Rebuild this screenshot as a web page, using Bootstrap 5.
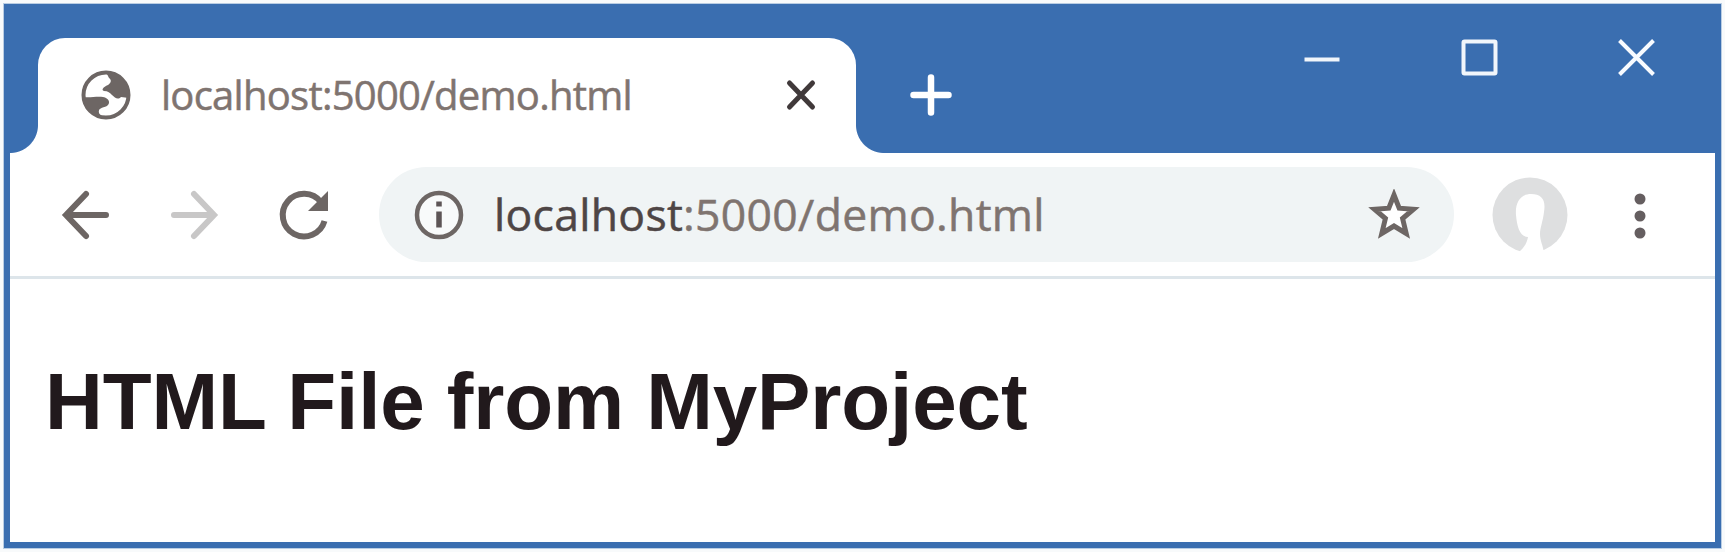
<!DOCTYPE html>
<html lang="en">
<head>
<meta charset="utf-8">
<title>localhost:5000/demo.html</title>
<link href="https://cdn.jsdelivr.net/npm/bootstrap@5.3.0/dist/css/bootstrap.min.css" rel="stylesheet">
<style>
  :root { --frame: #3a6eb0; --ink: #6d6664; }
  body { background: #f8fafb; height: 552px; padding: 3px; overflow: hidden; }
  svg { display: block; flex: none; }
  .browser { height: 546px; width: 1719px; border: 7px solid var(--frame); outline: 1px solid #b9cde3; outline-offset: -1px; }
  .titlebar { height: 143px; background: var(--frame); padding-left: 28px; }
  .page-tab { width: 818px; height: 115px; border-radius: 27px 27px 0 0; padding-left: 43px; padding-right: 39px; padding-bottom: 1px; }
  .page-tab::before, .page-tab::after { content: ""; position: absolute; bottom: 0; width: 28px; height: 28px; }
  .page-tab::before { left: -28px; background: radial-gradient(circle at 0 0, transparent 27.5px, #fff 28.5px); }
  .page-tab::after { right: -28px; background: radial-gradient(circle at 100% 0, transparent 27.5px, #fff 28.5px); }
  .ui-text { font-family: "Open Sans", "Noto Sans", sans-serif; white-space: nowrap; line-height: 1; color: #7f7470; -webkit-text-stroke: .5px currentColor; }
  .tab-title { font-size: 40px; margin-left: 30px; letter-spacing: -.74px; }
  .toolbar { height: 123px; padding-left: 48px; }
  .divider { height: 3px; background: #dde5ea; }
  .omnibox { width: 1075px; height: 95px; background: #f0f4f5; margin-left: 47px; padding: 0 34px; }
  .url { font-size: 44.500px; margin-left: 29px; letter-spacing: .3px; }
  .url b { font-weight: 400; color: #4e4545; }
  .page h1 { font: bold 80px/1 "Liberation Sans", Arial, sans-serif; letter-spacing: -.12px; color: #21191c; margin: 83px 0 0 35px; white-space: nowrap; }
</style>
</head>
<body>
<div class="browser bg-white">
  <header class="titlebar d-flex align-items-end">
    <div class="page-tab bg-white position-relative d-flex align-items-center">
      <svg width="50" height="50" viewBox="-25 -25 50 50">
        <circle r="22.500" fill="#fff" stroke="var(--ink)" stroke-width="4"/>
        <path fill="var(--ink)" d="M0-23L3-17C6-15 5-12 2-10C-3-8-5-5-2-4C2-4 4-2 6 0C9 3 12 5 15 2L23 3C24-12 13-22 0-23ZM-23 2C-16 3-9 1-3 2C3 3 5 8 1 11C-4 13-8 13-7 18L-4 23C-14 21-22 14-23 2Z"/>
      </svg>
      <span class="ui-text tab-title">localhost:5000/demo.html</span>
      <svg class="ms-auto" width="32" height="32" viewBox="-16 -16 32 32" stroke="#40393a" stroke-width="5" stroke-linecap="round"><path d="M-11.500-12 11.500 12M11.500-12-11.500 12"/></svg>
    </div>
    <svg style="margin:0 0 37px 54px" width="42" height="42" viewBox="-21 -21 42 42" stroke="#fff" stroke-width="6.500" stroke-linecap="round"><path d="M-17.500 0H17.500M0-17.500V17.500"/></svg>
    <div class="d-flex align-self-start ms-auto" style="gap:120px;margin:29px 60px 0 0">
      <svg width="37" height="37" viewBox="-18.500 -18.500 37 37" stroke="#f1f6fb" stroke-width="4"><path d="M-18 2H17"/></svg>
      <svg width="37" height="37" viewBox="-18.500 -18.500 37 37" fill="none" stroke="#f1f6fb" stroke-width="4"><rect x="-16" y="-16" width="32" height="32" rx="1"/></svg>
      <svg width="37" height="37" viewBox="-18.500 -18.500 37 37" stroke="#f8fbff" stroke-width="4"><path d="M-17-17 17 17M17-17-17 17"/></svg>
    </div>
  </header>
  <nav class="toolbar d-flex align-items-center">
    <svg width="56" height="56" viewBox="-28 -28 56 56" fill="none" stroke="var(--ink)" stroke-width="6" stroke-linecap="round"><path d="M20 0H-19M0-21-20 0 0 21"/></svg>
    <svg style="margin-left:52px" width="56" height="56" viewBox="-28 -28 56 56" fill="none" stroke="#c8c7c7" stroke-width="6" stroke-linecap="round"><path d="M-20 0H19M0-21 20 0 0 21"/></svg>
    <svg style="margin-left:54px" width="56" height="56" viewBox="-28 -28 56 56"><path d="M20.500 6A21.300 21.300 0 1 1 17-12.800" fill="none" stroke="var(--ink)" stroke-width="6"/><path d="M24-24V-4H4Z" fill="var(--ink)"/></svg>
    <div class="omnibox rounded-pill d-flex align-items-center">
      <svg width="52" height="52" viewBox="-26 -26 52 52"><circle r="22" fill="#fff" fill-opacity=".5" stroke="var(--ink)" stroke-width="4.500"/><path d="M0-13.500V-8.500M0-3.500V12.500" stroke="#5d5556" stroke-width="5.500"/></svg>
      <span class="ui-text url"><b>localhost</b>:5000/demo.html</span>
      <svg class="ms-auto" width="52" height="52" viewBox="-26 -26 52 52"><path d="M0-20 5.200-6.800 19.500-5.800 8.600 3.500 12.200 18.500 0 11-12.200 18.500-8.600 3.500-19.500-5.800-5.200-6.800Z" fill="#fff" stroke="var(--ink)" stroke-width="5"/></svg>
    </div>
    <svg style="margin-left:37px" width="78" height="78" viewBox="-39 -39 78 78"><circle r="37.500" fill="#dedfe0"/><path fill="#fff" d="M-14 0C-15-12-10-21 1-21C12-21 16-15 14-3C13 6 10 13 10 19C10 26 13 30 14 38H-12C-6 33-3 28-2 22C-10 22-13 12-14 0Z"/></svg>
    <svg style="margin-left:65px" width="12" height="50" viewBox="-6 -25 12 50" fill="#655e60"><circle cy="-16" r="5.500"/><circle cy="1" r="5.500"/><circle cy="18" r="5.500"/></svg>
  </nav>
  <div class="divider"></div>
  <main class="page"><h1>HTML File from MyProject</h1></main>
</div>
<script src="https://cdn.jsdelivr.net/npm/bootstrap@5.3.0/dist/js/bootstrap.bundle.min.js"></script>
</body>
</html>
